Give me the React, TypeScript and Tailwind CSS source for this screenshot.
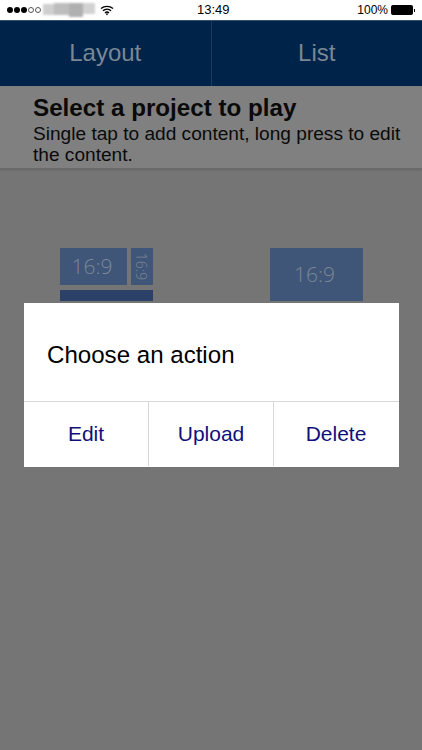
export default function App() {
  const dot = "w-[6px] h-[6px] rounded-full";
  return (
    <div className="relative w-[422px] h-[750px] overflow-hidden flex flex-col bg-[#757575] font-['Liberation_Sans',Arial,sans-serif]">
      <div className="h-5 shrink-0 bg-white relative flex items-center justify-between pl-[7px] pr-[7px] text-black">
        <div className="flex items-center gap-[1px]">
          <span className={`${dot} bg-black`} />
          <span className={`${dot} bg-black`} />
          <span className={`${dot} bg-black`} />
          <span className={`${dot} border border-[#555]`} />
          <span className={`${dot} border border-[#555]`} />
          <div className="w-[52px] h-[14px] ml-[1px] flex blur-[1px]">
            <span className="w-[11px] h-[11px] mt-[1px] bg-[#cfcfcf]" />
            <span className="w-[15px] h-[12px] bg-[#bdbdbd]" />
            <span className="w-[14px] h-[14px] bg-[#b0b0b0]" />
            <span className="w-[12px] h-[11px] bg-[#d2d2d2]" />
          </div>
          <svg width="14" height="11" viewBox="0 0 14 11" className="ml-[4px]">
            <path d="M1 3.6C4.4.6 9.6.6 13 3.6M3 5.8c2.3-2 5.7-2 8 0M5 8c1.1-1 2.9-1 4 0" fill="none" stroke="#000" strokeWidth="1.4" />
            <path d="M5.8 8.8 7 10.4l1.2-1.6c-.7-.5-1.7-.5-2.4 0z" fill="#000" />
          </svg>
        </div>
        <span className="absolute left-[197px] top-[2px] leading-4 text-[13px]">13:49</span>
        <div className="flex items-center gap-[3px]">
          <span className="text-[12px]">100%</span>
          <div className="flex items-center">
            <span className="w-[22px] h-[10px] bg-black rounded-[2px]" />
            <span className="w-[1.5px] h-[3px] bg-black ml-[.5px]" />
          </div>
        </div>
      </div>

      <div className="h-[66px] shrink-0 flex bg-[#00234a] border-t border-[#33506f] text-[#7a8794] text-[24px]">
        <div className="flex-1 flex items-center justify-center pb-[1px] border-r border-[#1a3a5f]">Layout</div>
        <div className="flex-1 flex items-center justify-center pb-[1px]">List</div>
      </div>

      <div className="h-[83px] shrink-0 bg-[#808080] border-b border-[#6b6b6b] shadow-[0_1px_2px_rgba(0,0,0,0.15)] pl-[33px] pr-2 pt-[8px] text-[#0a0a0a]">
        <div className="text-[24.2px] leading-[27px] font-bold">Select a project to play</div>
        <div className="text-[19.1px] leading-[21px] mt-[2px]">Single tap to add content, long press to edit the content.</div>
      </div>

      <div className="flex pt-[79px] text-[#7b8797]">
        <div className="w-[211px] pl-[60px]">
          <div className="flex gap-[4px]">
            <div className="w-[67px] h-[37px] pr-[3px] bg-[#3f5678] flex items-center justify-center text-[21px] font-['Open_Sans',sans-serif] font-light">16:9</div>
            <div className="w-[22px] h-[37px] bg-[#3f5678] flex items-center justify-center">
              <span className="rotate-90 text-[14px] font-['Open_Sans',sans-serif] font-light">16:9</span>
            </div>
          </div>
          <div className="w-[93px] h-[11px] mt-[5px] bg-[#2c4168]" />
        </div>
        <div className="pl-[59px]">
          <div className="w-[93px] h-[53px] pr-[4px] bg-[#3f5678] flex items-center justify-center text-[21px] font-['Open_Sans',sans-serif] font-light">16:9</div>
        </div>
      </div>

      <div className="absolute left-[24px] top-[303px] w-[375px] h-[164px] bg-white flex flex-col">
        <div className="h-[99px] flex items-center pl-[23px] pt-[7px] text-[24.1px] text-black border-b border-[#d8d8d8]">Choose an action</div>
        <div className="flex-1 flex pb-[1px] text-[21px] text-[#10107a]">
          <div className="w-[125px] flex items-center justify-center border-r border-[#d8d8d8]">Edit</div>
          <div className="w-[125px] flex items-center justify-center border-r border-[#d8d8d8]">Upload</div>
          <div className="w-[125px] pr-[1px] flex items-center justify-center">Delete</div>
        </div>
      </div>
    </div>
  );
}
